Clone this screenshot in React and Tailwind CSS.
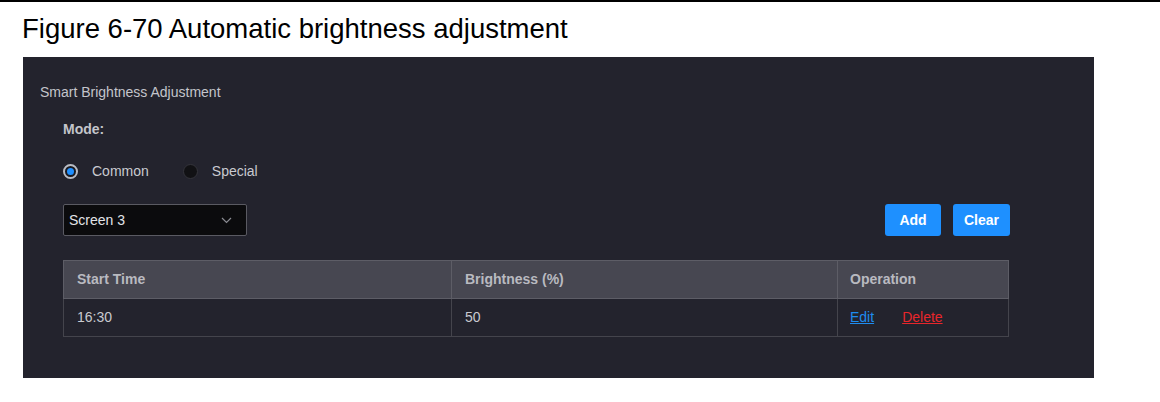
import React from 'react';

function Radio({ checked, label }) {
  return (
    <label className="flex items-center gap-[14px]">
      <span
        className={
          'w-[15px] h-[15px] rounded-full flex items-center justify-center ' +
          (checked ? 'border-2 border-[#b9bcc4] bg-[#1a1a20]' : 'border border-[#34343b] bg-[#111114]')
        }
      >
        {checked && <span className="w-[7px] h-[7px] rounded-full bg-[#1f8fff]" />}
      </span>
      <span className="text-[14px] text-[#c9cad0]">{label}</span>
    </label>
  );
}

export default function App() {
  return (
    <div className="w-[1160px] h-[402px] bg-white relative" style={{ fontFamily: '"Liberation Sans", Arial, sans-serif' }}>
      <div className="h-[2px] bg-black" />
      <h1 className="pl-[22px] pt-[11px] text-[27.5px] leading-[31px] text-black">Figure 6-70 Automatic brightness adjustment</h1>

      <div className="ml-[23px] mt-[13px] w-[1071px] h-[321px] bg-[#23232d] pl-[17px] pt-[26px]">
        <div className="text-[14px] leading-[18px] text-[#c4c5cb]">Smart Brightness Adjustment</div>

        <div className="pl-[23px] pr-[84px]">
          <div className="mt-[19px] text-[14px] leading-[18px] text-[#c4c5cb] font-semibold">Mode:</div>

          <div className="mt-[23px] flex items-center gap-[34px]">
            <Radio checked label="Common" />
            <Radio label="Special" />
          </div>

          <div className="mt-[22px] flex items-center justify-between">
            <div className="w-[184px] h-[32px] bg-[#0b0b0d] border border-[#5a5a62] rounded-[2px] flex items-center justify-between pl-[5px] pr-[14px]">
              <span className="text-[14px] text-[#e2e3e8]">Screen 3</span>
              <svg width="11" height="7" viewBox="0 0 11 7" fill="none">
                <path d="M1 1l4.5 4.5L10 1" stroke="#8a8b92" strokeWidth="1.2" />
              </svg>
            </div>
            <div className="flex items-center gap-[12px]">
              <button className="w-[56px] h-[32px] rounded-[3px] bg-[#1e90ff] text-white text-[14px] font-semibold">Add</button>
              <button className="w-[57px] h-[32px] rounded-[3px] bg-[#1e90ff] text-white text-[14px] font-semibold">Clear</button>
            </div>
          </div>

          <table className="mt-[24px] w-[946px] border-collapse text-[14px]">
            <colgroup>
              <col className="w-[388px]" />
              <col className="w-[386px]" />
              <col />
            </colgroup>
            <thead>
              <tr className="bg-[#474751] h-[38px]">
                <th className="border border-[#5d5d66] text-left font-semibold text-[#b9bac0] pl-[13px]">Start Time</th>
                <th className="border border-[#5d5d66] text-left font-semibold text-[#b9bac0] pl-[13px]">Brightness (%)</th>
                <th className="border border-[#5d5d66] text-left font-semibold text-[#b9bac0] pl-[12px]">Operation</th>
              </tr>
            </thead>
            <tbody>
              <tr className="bg-[#23232d] h-[38px]">
                <td className="border border-[#44444c] pl-[13px] text-[#c9cad0]">16:30</td>
                <td className="border border-[#44444c] pl-[13px] text-[#c9cad0]">50</td>
                <td className="border border-[#44444c] pl-[12px]">
                  <span className="text-[#1e8cf0] underline">Edit</span>
                  <span className="ml-[28px] text-[#e8262b] underline">Delete</span>
                </td>
              </tr>
            </tbody>
          </table>
        </div>
      </div>
    </div>
  );
}
